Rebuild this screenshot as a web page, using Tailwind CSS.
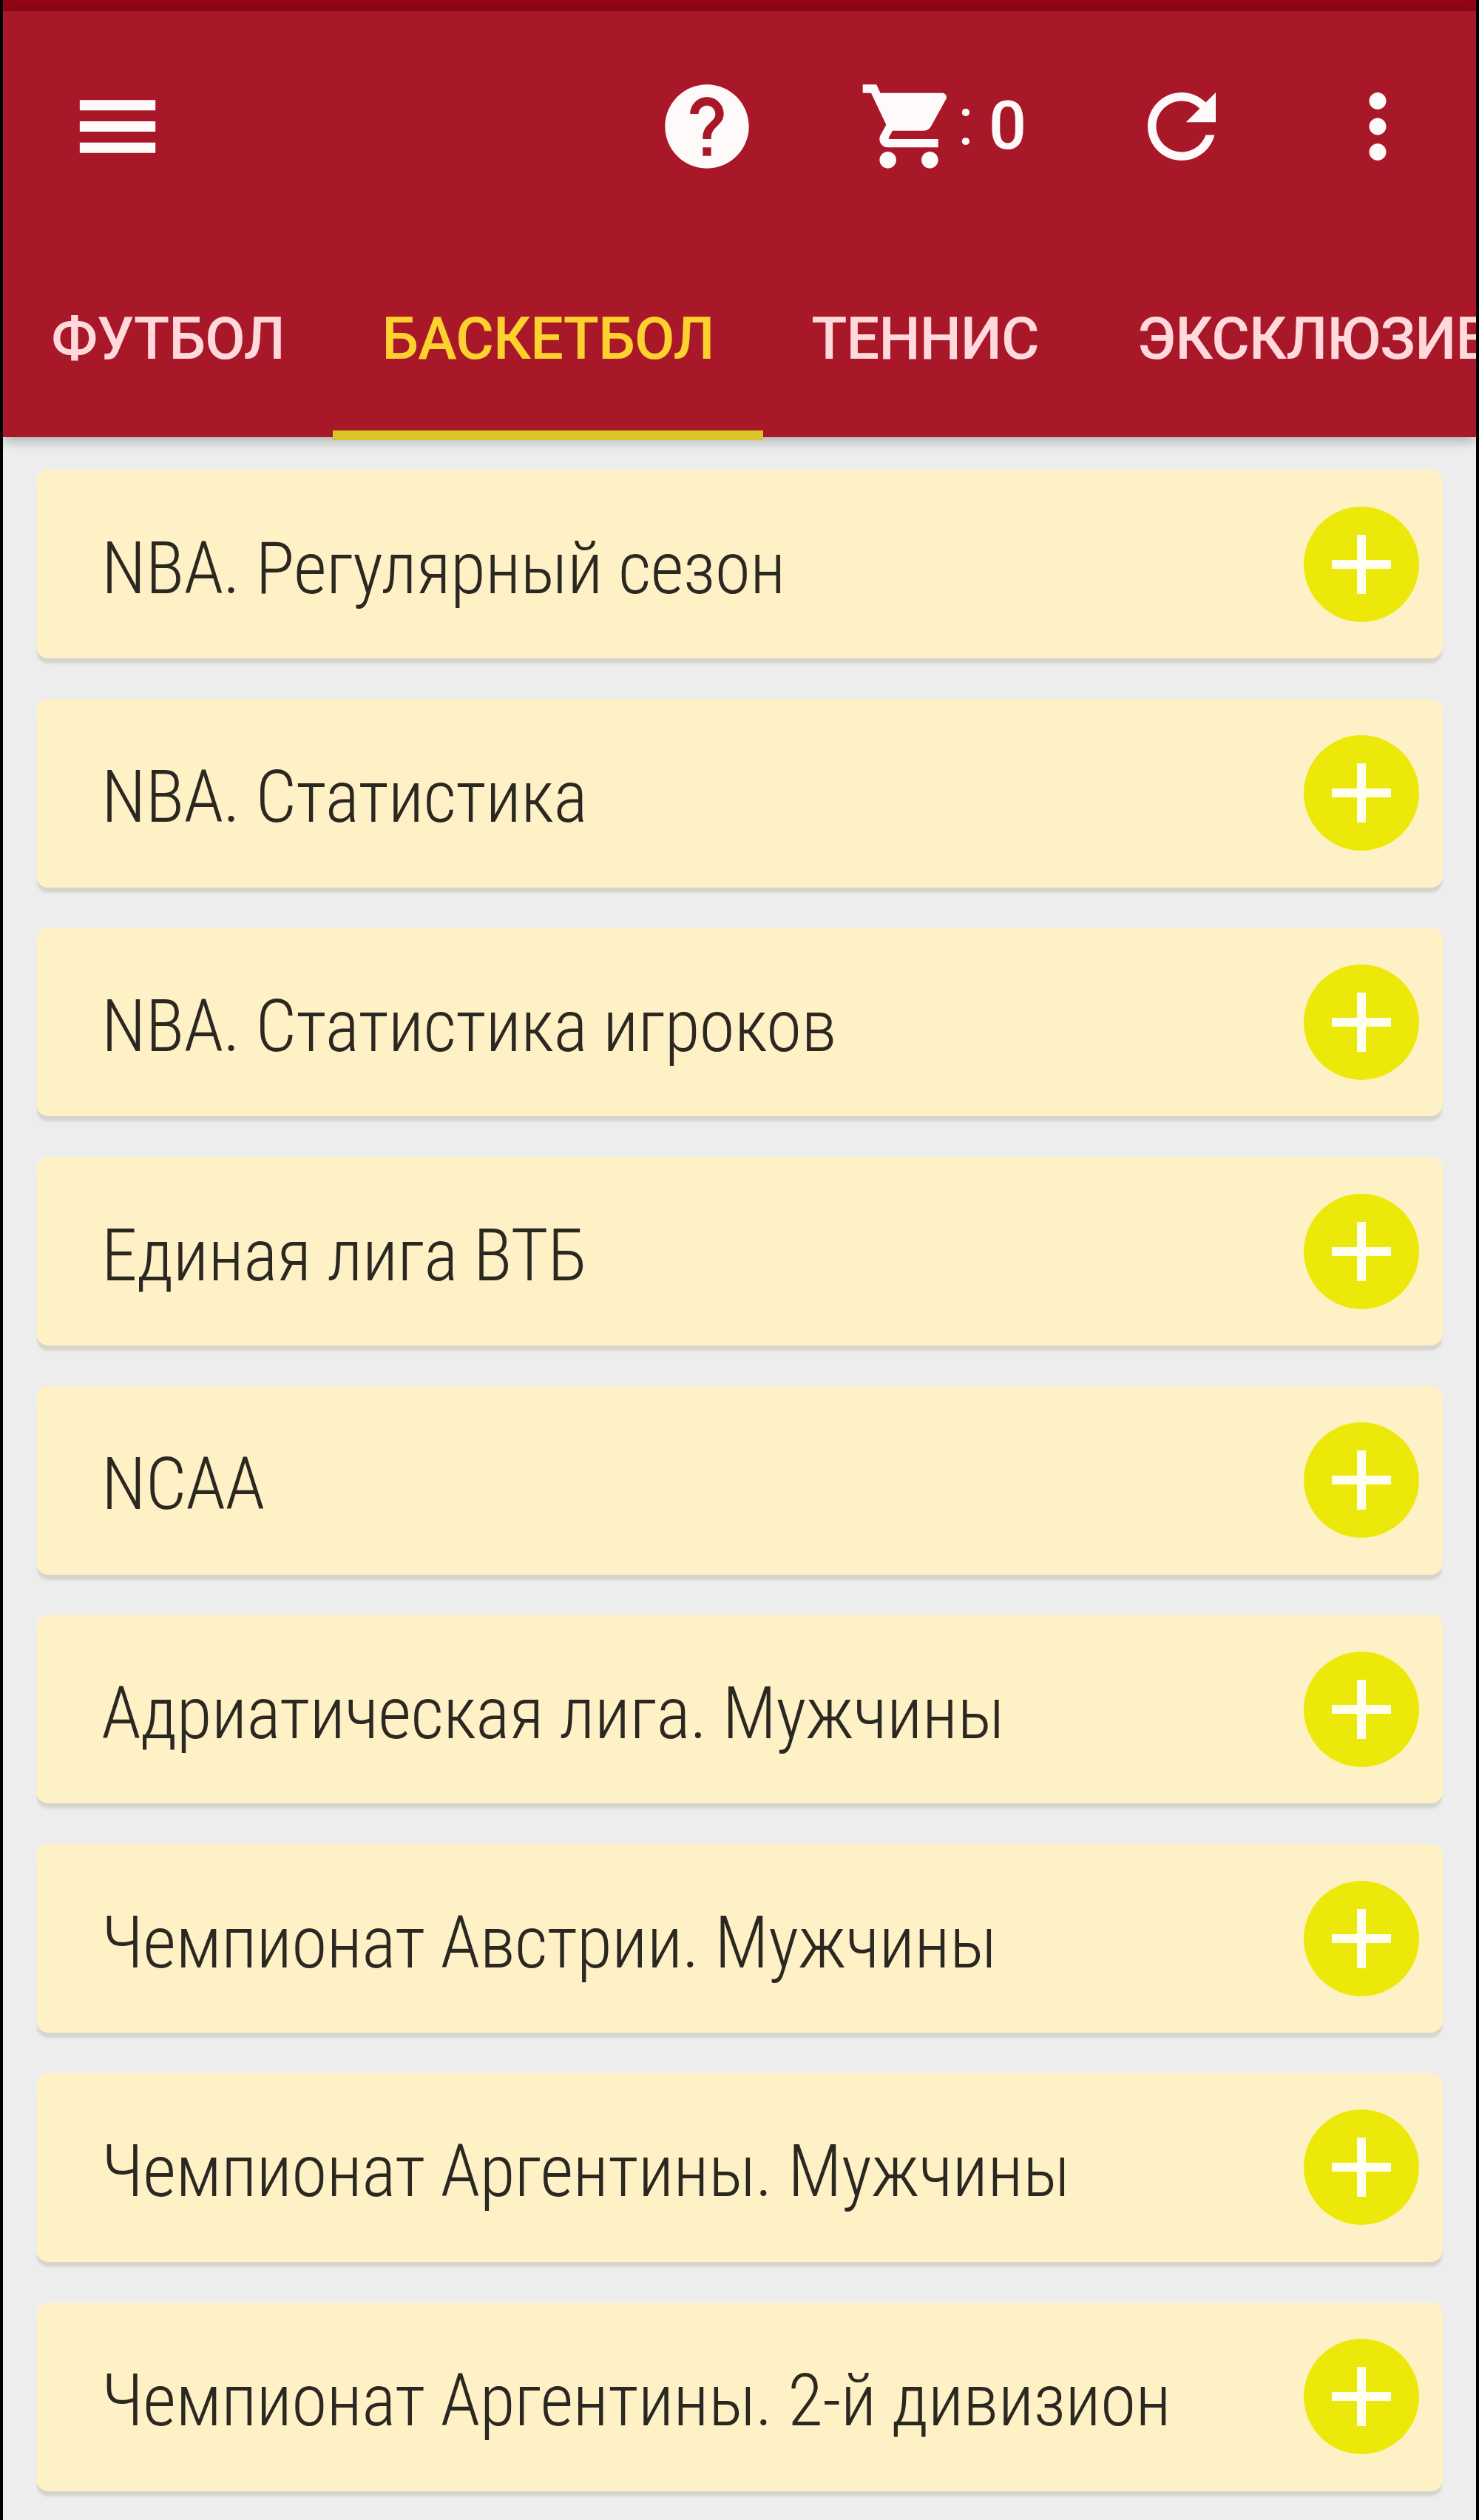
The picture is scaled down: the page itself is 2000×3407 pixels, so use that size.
<!DOCTYPE html>
<html lang="ru">
<head>
  <meta charset="UTF-8" />
  <meta name="viewport" content="width=device-width, initial-scale=1.0"/>
  <title>Баскетбол</title>
  <script src="https://cdn.jsdelivr.net/npm/@tailwindcss/browser@4"></script>
</head>
<body class="bg-black">
  <div class="mx-1 h-[3407px] bg-[#ededee] overflow-hidden font-['Roboto',sans-serif]">

    <!-- Status bar -->
    <div class="h-[15px] bg-[#930618]"></div>

    <!-- Header -->
    <header class="relative h-[576px] bg-[#a81829] shadow-[0_4px_16px_rgba(0,0,0,0.3)]">
      <div class="flex items-center h-[312px] pl-[86px] pr-[64px] text-[#fffafa]">
        <svg class="w-[138px] h-[138px]" viewBox="0 0 24 24" fill="currentColor"><path d="M3.100 18.200h17.800v-2.400H3.100v2.400zm0-5h17.800v-2.400H3.100v2.400zm0-7.400v2.400h17.800V5.800H3.100z"/></svg>
        <svg class="w-[136px] h-[136px] ml-[660px]" viewBox="0 0 24 24" fill="currentColor"><path d="M12 2C6.480 2 2 6.480 2 12s4.480 10 10 10 10-4.480 10-10S17.520 2 12 2zm1 17h-2v-2h2v2zm2.070-7.750l-.9.920C13.450 12.900 13 13.500 13 15h-2v-.5c0-1.100.45-2.100 1.170-2.830l1.240-1.260c.37-.36.59-.86.59-1.410 0-1.100-.9-2-2-2s-2 .9-2 2H8c0-2.210 1.790-4 4-4s4 1.790 4 4c0 .88-.36 1.680-.93 2.250z"/></svg>
        <svg class="w-[136px] h-[136px] ml-[137px]" viewBox="0 0 24 24" fill="currentColor"><path d="M7 18c-1.100 0-1.990.9-1.990 2S5.900 22 7 22s2-.9 2-2-.9-2-2-2zM1 2v2h2l3.600 7.590-1.350 2.450c-.16.280-.25.610-.25.960 0 1.100.9 2 2 2h12v-2H7.420c-.14 0-.25-.11-.25-.25l.03-.12.900-1.630h7.450c.75 0 1.410-.41 1.750-1.030l3.580-6.490c.08-.14.12-.31.12-.48 0-.55-.45-1-1-1H5.210l-.94-2H1zm16 16c-1.100 0-1.990.9-1.990 2s.89 2 1.990 2 2-.9 2-2-.9-2-2-2z"/></svg>
        <div class="flex w-[232px] text-[90px] leading-none font-medium">
          <span class="w-[42px] -ml-0.5 -mt-1.5 font-normal">:</span>
          <span>0</span>
        </div>
        <svg class="w-[138px] h-[138px]" viewBox="0 0 24 24" fill="currentColor"><path d="M17.650 6.350C16.200 4.900 14.210 4 12 4c-4.420 0-7.990 3.580-7.990 8s3.570 8 7.990 8c3.730 0 6.840-2.550 7.730-6h-2.080c-.82 2.330-3.040 4-5.650 4-3.310 0-6-2.690-6-6s2.690-6 6-6c1.660 0 3.140.69 4.220 1.780L13 11h7V4l-2.350 2.350z"/></svg>
        <svg class="w-[138px] h-[138px] ml-auto" viewBox="0 0 24 24" fill="currentColor"><path d="M12 8c1.100 0 2-.9 2-2s-.9-2-2-2-2 .9-2 2 .9 2 2 2zm0 2c-1.100 0-2 .9-2 2s.9 2 2 2 2-.9 2-2-.9-2-2-2zm0 6c-1.100 0-2 .9-2 2s.9 2 2 2 2-.9 2-2-.9-2-2-2z"/></svg>
      </div>

      <!-- Tabs -->
      <nav class="flex h-[268px] overflow-hidden whitespace-nowrap text-[79px] leading-[262px] tracking-[-0.8px] font-medium text-[#ffd9dc]">
        <a class="w-[446px] shrink-0 text-center">ФУТБОЛ</a>
        <a class="w-[582px] shrink-0 text-center text-[#fdd22f] border-b-[13px] border-[#d9c528]">БАСКЕТБОЛ</a>
        <a class="w-[438px] shrink-0 text-center">ТЕННИС</a>
        <a class="shrink-0 pl-[68px]">ЭКСКЛЮЗИВ</a>
      </nav>
    </header>

    <!-- Leagues -->
    <main id="leagues" class="flex flex-col gap-[54.700px] px-[45px] pt-[44px]"></main>
  </div>

  <script>
    const leagues = [
      'NBA. Регулярный сезон',
      'NBA. Статистика',
      'NBA. Статистика игроков',
      'Единая лига ВТБ',
      'NCAA',
      'Адриатическая лига. Мужчины',
      'Чемпионат Австрии. Мужчины',
      'Чемпионат Аргентины. Мужчины',
      'Чемпионат Аргентины. 2-й дивизион'
    ];

    document.getElementById('leagues').innerHTML = leagues.map(name => `
      <div class="flex items-center justify-between h-[255px] shrink-0 pl-[88px] pr-[32px] rounded-[16px] bg-[#fef1c6] shadow-[0_8px_3px_-1px_#d6d5cd]">
        <span class="pt-3 whitespace-nowrap text-[98px] leading-none tracking-[-0.75px] font-light [font-stretch:75%] text-[#2b2721]">${name}</span>
        <button class="flex items-center justify-center w-[156px] h-[156px] rounded-full bg-[#ece90a]">
          <svg class="w-[80px] h-[80px]" viewBox="0 0 80 80" stroke="#fffff0" stroke-width="12"><path d="M40 0v80M0 40h80"/></svg>
        </button>
      </div>`).join('');
  </script>
</body>
</html>
